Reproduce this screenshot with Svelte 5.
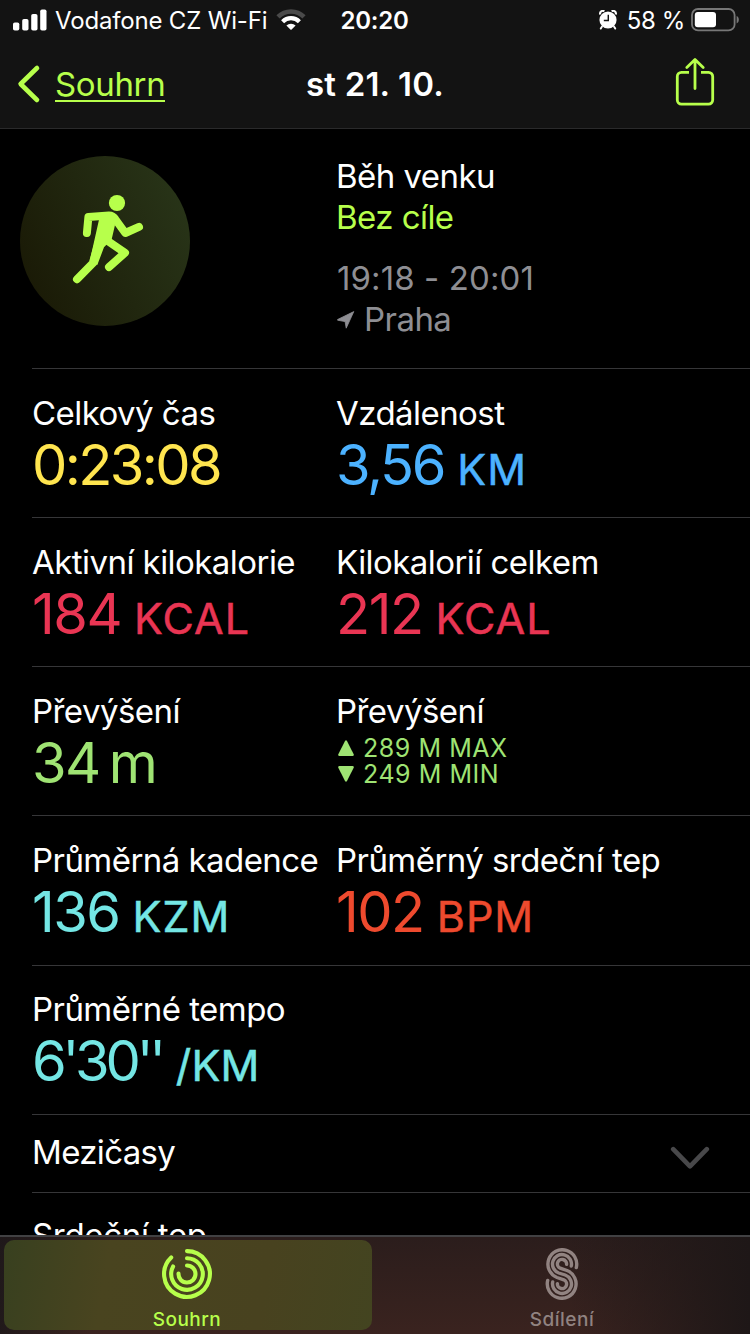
<script lang="ts">
  const rows = [
    [
      { label: 'Celkový čas', value: '0:23:08', unit: '', color: 'yellow' },
      { label: 'Vzdálenost', value: '3,56', unit: 'KM', color: 'blue' }
    ],
    [
      { label: 'Aktivní kilokalorie', value: '184', unit: 'KCAL', color: 'red' },
      { label: 'Kilokalorií celkem', value: '212', unit: 'KCAL', color: 'red' }
    ],
    [
      { label: 'Převýšení', value: '34', unit: 'm', color: 'green' },
      { label: 'Převýšení', max: '289 M MAX', min: '249 M MIN', color: 'green' }
    ],
    [
      { label: 'Průměrná kadence', value: '136', unit: 'KZM', color: 'cyan' },
      { label: 'Průměrný srdeční tep', value: '102', unit: 'BPM', color: 'orange' }
    ],
    [{ label: 'Průměrné tempo', value: "6'30''", unit: '/KM', color: 'cyan' }]
  ]
</script>

<div class="screen">
  <header>
    <div class="status">
      <div class="network">
        <svg class="signal" width="34" height="22" viewBox="0 0 34 22" fill="#fff">
          <rect x="0" y="13.5" width="6.3" height="8" rx="1.8" />
          <rect x="9.2" y="10" width="6.3" height="11.5" rx="1.8" />
          <rect x="18.2" y="5" width="6.3" height="16.5" rx="1.8" />
          <rect x="27.2" y="0.5" width="6.3" height="21" rx="1.8" />
        </svg>
        <span class="carrier">Vodafone CZ Wi-Fi</span>
        <svg class="wifi" width="30" height="22" viewBox="-15 -21 30 22" fill="none">
          <path d="M-13 -13.2A18.5 18.5 0 0 1 13 -13.2" stroke="#4a4a4a" stroke-width="4.6" />
          <path d="M-8.4 -8.3A11.8 11.8 0 0 1 8.4 -8.3" stroke="#fff" stroke-width="4.2" />
          <path d="M-4.6 -4.4A6.5 6.5 0 0 1 4.6 -4.4L0.6 -0.4Q0 0.1 -0.6 -0.4Z" fill="#fff" />
        </svg>
      </div>
      <span class="clock">20:20</span>
      <div class="power">
        <svg class="alarm" width="18" height="20" viewBox="0.8 0.5 18.4 21">
          <circle cx="10" cy="11" r="9" fill="#fff" />
          <path d="M1.8 5.2A3 3 0 0 1 6.2 1.8M13.8 1.8A3 3 0 0 1 18.2 5.2" fill="none" stroke="#fff" stroke-width="2.2" />
          <path d="M3.6 18L2.4 20M16.4 18L17.6 20" stroke="#fff" stroke-width="2" stroke-linecap="round" />
          <path d="M10.3 5.5V11.5H5.6" fill="none" stroke="#131313" stroke-width="1.5" />
        </svg>
        <span class="percent">58 %</span>
        <svg width="49" height="24" viewBox="0 0 49 24">
          <rect x="1" y="1" width="42.6" height="21.4" rx="6" fill="none" stroke="#777" stroke-width="1.8" />
          <rect x="3.8" y="4" width="21.2" height="15.2" rx="3" fill="#fff" />
          <path d="M45.6 8C48.6 9.2 48.6 14.2 45.6 15.4Z" fill="#777" />
        </svg>
      </div>
    </div>
    <nav>
      <a class="back" href="#souhrn">
        <svg width="24" height="40" viewBox="0 0 24 40">
          <path d="M20 4L3.6 20L20 36" fill="none" stroke="#b7ff4b" stroke-width="4.6" stroke-linecap="round" stroke-linejoin="round" />
        </svg>
        <span>Souhrn</span>
      </a>
      <h1>st 21. 10.</h1>
      <button class="share" aria-label="Sdílet">
        <svg width="40" height="50" viewBox="0 0 40 50" fill="none" stroke="#b7ff4b" stroke-width="2.8">
          <path d="M14 15.3H6.5A4.2 4.2 0 0 0 2.3 19.5V43A4.2 4.2 0 0 0 6.5 47.2H33.5A4.2 4.2 0 0 0 37.7 43V19.5A4.2 4.2 0 0 0 33.5 15.3H26" />
          <path d="M20 31.5V3M11.8 10.6L20 2.4L28.2 10.6" stroke-linecap="round" stroke-linejoin="round" />
        </svg>
      </button>
    </nav>
  </header>

  <main>
    <section class="workout">
      <div class="badge">
        <svg width="170" height="170" viewBox="20 156 170 170" fill="none" stroke="#b7ff4b" stroke-width="8" stroke-linecap="round" stroke-linejoin="round">
          <circle cx="117" cy="203" r="8.1" fill="#b7ff4b" stroke="none" />
          <path d="M86.9 233L88.4 217L109 215.6Q113 215.6 115.5 219.5L125.3 233L139 226.8" />
          <path d="M103 220L93.5 262.5L77 279.2" />
          <path d="M108.5 241.5L125 252.8L109 267" />
          <path d="M101.7 218L113 218L115 225L111.7 239.3L104 247.3L97.3 265L89.3 260.7Z" fill="#b7ff4b" stroke="none" />
        </svg>
      </div>
      <div class="details">
        <p>Běh venku</p>
        <p class="goal">Bez cíle</p>
        <p class="muted time">19:18 - 20:01</p>
        <p class="muted place">
          <svg width="18" height="18" viewBox="0 0 18 18" fill="#8e8e93" stroke="#8e8e93" stroke-width="0.8" stroke-linejoin="round">
            <path d="M16.8 0.6L9.2 17.2L8.1 10.6L0.6 9.2L0.6 8.5Z" />
          </svg>
          <span>Praha</span>
        </p>
      </div>
    </section>

    {#each rows as row}
      <section class="row">
        {#each row as stat}
          <div class="stat">
            <h2>{stat.label}</h2>
            {#if stat.max}
              <div class="ranges {stat.color}">
                <p class="range">
                  <svg width="16" height="16" viewBox="0 0 16 16"><path d="M7 1Q8 -0.4 9 1L15.8 14.4Q16 16 14.6 16H1.4Q0 16 0.2 14.4Z" fill="currentColor" /></svg>
                  <span>{stat.max}</span>
                </p>
                <p class="range">
                  <svg width="16" height="16" viewBox="0 0 16 16"><path d="M7 15Q8 16.4 9 15L15.8 1.6Q16 0 14.6 0H1.4Q0 0 0.2 1.6Z" fill="currentColor" /></svg>
                  <span>{stat.min}</span>
                </p>
              </div>
            {:else}
              <p class="value {stat.color}" class:pace={stat.unit === '/KM'} class:duration={!stat.unit}>
                {stat.value}{#if stat.unit}<span class="unit" class:meters={stat.unit === 'm'}>{stat.unit}</span>{/if}
              </p>
            {/if}
          </div>
        {/each}
      </section>
    {/each}

    <section class="row splits">
      <h2>Mezičasy</h2>
      <svg width="40" height="24" viewBox="0 0 40 24">
        <path d="M3.2 3.2L20 20.4L36.8 3.2" fill="none" stroke="#48484a" stroke-width="4.6" stroke-linecap="round" stroke-linejoin="round" />
      </svg>
    </section>
    <section class="row heart">
      <h2>Srdeční tep</h2>
    </section>
  </main>

  <footer>
    <a class="tab active" href="#souhrn">
      <svg width="52" height="52" viewBox="-26 -26 52 52" fill="none" stroke="currentColor" stroke-width="4.1" stroke-linecap="round">
        <path d="M0 -22.9A22.9 22.9 0 1 1 -15.8 -16.6" />
        <path d="M0 -15.8A15.8 15.8 0 1 1 -13.9 -7.5" />
        <path d="M0 -8.5A8.5 8.5 0 1 1 -8.5 -0.4" />
      </svg>
      <span>Souhrn</span>
    </a>
    <a class="tab" href="#sdileni">
      <svg width="52" height="52" viewBox="-26 -26 52 52" fill="none" stroke="currentColor" stroke-width="3.4" stroke-linecap="round">
        <path d="M14.3 -6.4A14.4 14.4 0 1 0 -5 3.5L1.8 5.8A4.6 4.6 0 1 1 -4.6 9.6" />
        <path d="M9.3 -8A9.5 9.5 0 1 0 -3.2 -1L3.2 1A9.5 9.5 0 1 1 -9.3 8" />
        <path d="M4.6 -9.6A4.6 4.6 0 1 0 -1.8 -5.8L5 -3.5A14.4 14.4 0 1 1 -14.3 6.4" />
      </svg>
      <span>Sdílení</span>
    </a>
  </footer>
</div>

<style>
  :global(body) {
    background: #000;
  }

  .screen {
    display: flex;
    flex-direction: column;
    width: 750px;
    height: 1334px;
    overflow: hidden;
    background: #000;
    color: #fff;
    font-family: Inter, 'Liberation Sans', sans-serif;
    font-size: 33px;
    line-height: 41px;
    letter-spacing: -0.55px;
  }

  h1,
  h2,
  p {
    margin: 0;
    font-size: inherit;
    font-weight: 400;
    white-space: nowrap;
  }

  svg {
    display: block;
    flex: none;
  }

  a {
    color: inherit;
    text-decoration: none;
  }

  header {
    box-sizing: border-box;
    flex: none;
    height: 129px;
    background: #131313;
    border-bottom: 1px solid #2a2a2b;
  }

  .status {
    display: grid;
    grid-template-columns: 1fr auto 1fr;
    align-items: center;
    height: 40px;
    padding: 0 10px 0 12px;
    font-size: 24px;
    line-height: 38px;
  }

  .status span {
    padding-top: 2px;
  }

  .network,
  .power {
    display: flex;
    align-items: center;
  }

  .power {
    justify-content: flex-end;
  }

  .signal {
    margin-left: 1px;
  }

  .carrier {
    margin: 0 9px 0 8px;
    letter-spacing: -0.17px;
  }

  .clock {
    margin-right: 3px;
    font-weight: 600;
    letter-spacing: -0.2px;
  }

  .percent {
    margin: 0 6px 0 10px;
    letter-spacing: -0.35px;
  }

  nav {
    display: grid;
    grid-template-columns: 1fr auto 1fr;
    align-items: center;
    height: 88px;
    padding: 0 17px;
  }

  .back {
    display: flex;
    align-items: center;
    gap: 14px;
    color: #b7ff4b;
    letter-spacing: -0.35px;
  }

  .back span {
    height: 33px;
    padding-top: 1px;
    line-height: 34px;
    border-bottom: 2px solid #b7ff4b;
  }

  h1 {
    font-weight: 600;
    letter-spacing: 0.2px;
  }

  .share {
    justify-self: end;
    padding: 0;
    margin: 0 18px 4px 0;
    border: 0;
    background: none;
  }

  main {
    flex: 1;
    min-height: 0;
    overflow: hidden;
  }

  .workout {
    display: flex;
    box-sizing: border-box;
    height: 239px;
    padding: 27px 0 0 20px;
  }

  .badge {
    width: 170px;
    height: 170px;
    margin-right: 146px;
    border-radius: 50%;
    background: linear-gradient(65deg, #1a1a06 10%, #283418 90%);
  }

  .goal {
    color: #b7ff4b;
  }

  .muted {
    color: #8e8e93;
  }

  .time {
    margin-top: 20px;
    padding-left: 1px;
    letter-spacing: 0.1px;
  }

  .place {
    display: flex;
    align-items: center;
    gap: 9px;
    padding-left: 1px;
  }

  .row {
    display: grid;
    grid-template-columns: 304px 1fr;
    box-sizing: border-box;
    height: 149px;
    margin-left: 32px;
    padding-top: 24px;
    border-top: 1px solid #363638;
  }

  .row:nth-child(5) {
    height: 150px;
  }

  .row:nth-child(6) {
    padding-top: 23px;
  }

  .value {
    padding-top: 1px;
    font-size: 56px;
    line-height: 60px;
    letter-spacing: -1.5px;
  }

  .value.duration {
    letter-spacing: -2.6px;
  }

  .value.blue {
    letter-spacing: -2.3px;
  }

  .value.pace {
    letter-spacing: -4.2px;
  }

  .unit {
    margin-left: 13px;
    font-size: 43px;
    letter-spacing: 1px;
    -webkit-text-stroke: 0.5px currentColor;
  }

  .pace .unit {
    margin-left: 14px;
    letter-spacing: 0.2px;
  }

  .unit.meters {
    margin-left: 9px;
    font-size: 56px;
    -webkit-text-stroke: 0;
  }

  .ranges {
    padding: 3px 0 0 2px;
  }

  .range {
    display: flex;
    align-items: center;
    gap: 9px;
    font-size: 25px;
    line-height: 26px;
    letter-spacing: 0.55px;
  }

  .yellow {
    color: #ffe54f;
  }

  .blue {
    color: #4cb2ff;
  }

  .red {
    color: #e93553;
  }

  .green {
    color: #9fe373;
  }

  .cyan {
    color: #74e6e4;
  }

  .orange {
    color: #ee4a2e;
  }

  .splits {
    display: flex;
    justify-content: space-between;
    height: 78px;
    padding: 17px 40px 0 0;
    letter-spacing: -0.65px;
  }

  .splits svg {
    margin-top: 14px;
  }

  .heart {
    padding-top: 22px;
    letter-spacing: -0.3px;
  }

  footer {
    display: flex;
    box-sizing: border-box;
    flex: none;
    height: 99px;
    padding: 3px 4px 4px;
    border-top: 2px solid #414143;
    background:
      linear-gradient(90deg, rgba(30, 24, 26, 0.9), rgba(30, 24, 26, 0) 12%, rgba(30, 23, 23, 0) 76%, #1e1717 100%),
      linear-gradient(#2b1d1c, #3a231f);
  }

  .tab {
    display: flex;
    flex: 1;
    flex-direction: column;
    align-items: center;
    padding-top: 8px;
    margin-left: 6px;
    color: #918381;
    font-size: 19px;
    font-weight: 500;
    line-height: 40px;
    letter-spacing: 0.5px;
  }

  .tab.active {
    box-sizing: border-box;
    flex: none;
    width: 368px;
    padding-right: 2px;
    margin: 0;
    border-radius: 10px;
    background: linear-gradient(100deg, #38401f, #49441f 28%, #48421f 70%, #434420);
    color: #b7ff4b;
  }
</style>
